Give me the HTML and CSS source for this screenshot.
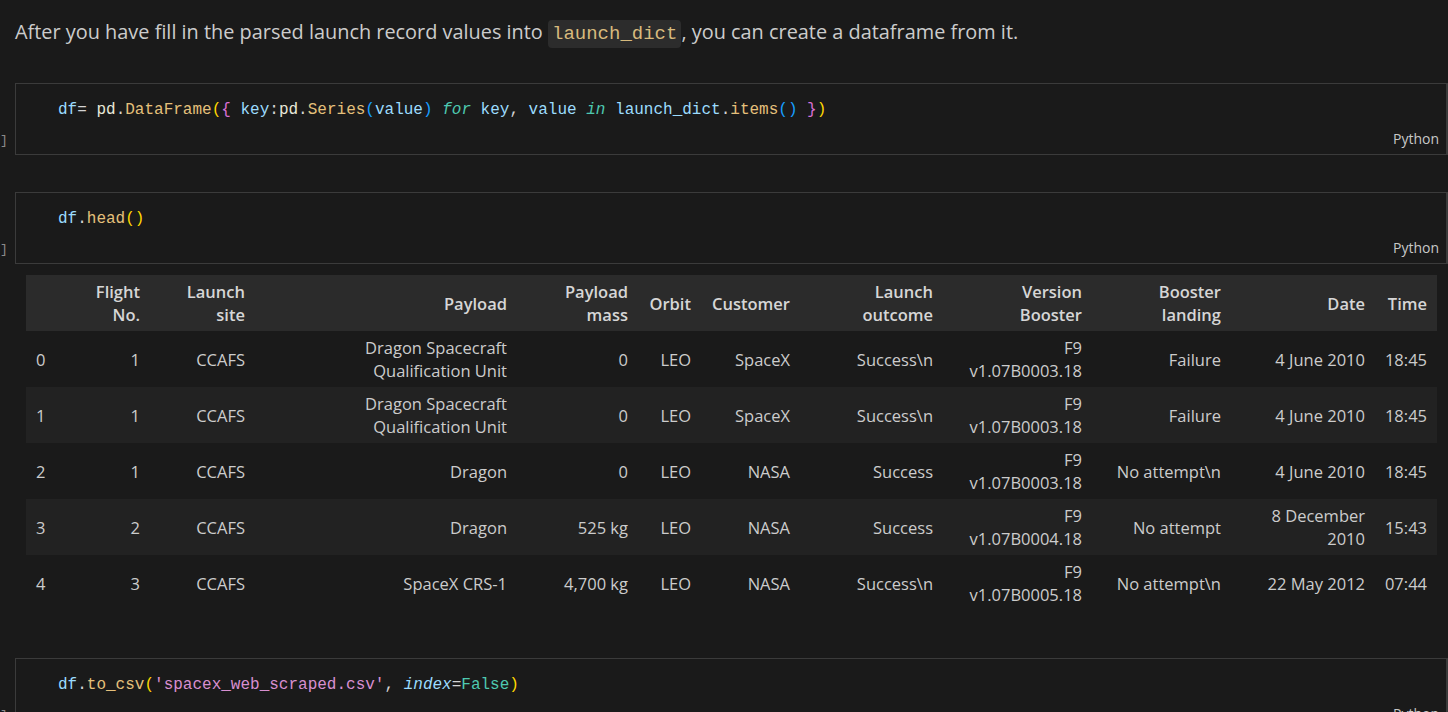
FILE: index.html
```html
<!DOCTYPE html>
<html>
<head>
<meta charset="utf-8">
<link rel="stylesheet" href="styles.css">
</head>
<body>
<div class="md">After you have fill in the parsed launch record values into <code class="inline">launch_dict</code>, you can create a dataframe from it.</div>

<div class="cell">
  <div class="gutter">]</div>
  <div class="box">
    <pre class="code"><span class="v">df</span><span class="op">=</span> <span class="m">pd</span>.<span class="f">DataFrame</span><span class="b1">(</span><span class="b2">{</span> <span class="v">key</span>:<span class="m">pd</span>.<span class="f">Series</span><span class="b3">(</span><span class="v">value</span><span class="b3">)</span> <span class="kw">for</span> <span class="v">key</span>, <span class="v">value</span> <span class="kw">in</span> <span class="v">launch_dict</span>.<span class="f">items</span><span class="b3">()</span> <span class="b2">}</span><span class="b1">)</span></pre>
    <div class="lang">Python</div>
  </div>
</div>

<div class="cell cell2">
  <div class="gutter">]</div>
  <div class="box">
    <pre class="code"><span class="v">df</span>.<span class="f">head</span><span class="b1">()</span></pre>
    <div class="lang">Python</div>
  </div>
</div>

<div class="output">
<table class="df">
  <colgroup>
    <col class="c-idx"><col class="c-flight"><col class="c-site"><col class="c-payload"><col class="c-mass"><col class="c-orbit"><col class="c-cust"><col class="c-out"><col class="c-ver"><col class="c-land"><col class="c-date"><col class="c-time">
  </colgroup>
  <thead>
    <tr><th></th><th>Flight<br>No.</th><th>Launch<br>site</th><th>Payload</th><th>Payload<br>mass</th><th>Orbit</th><th>Customer</th><th>Launch<br>outcome</th><th>Version<br>Booster</th><th>Booster<br>landing</th><th>Date</th><th>Time</th></tr>
  </thead>
  <tbody>
    <tr><td class="idx">0</td><td>1</td><td>CCAFS</td><td>Dragon Spacecraft<br>Qualification Unit</td><td>0</td><td>LEO</td><td>SpaceX</td><td>Success\n</td><td>F9<br>v1.07B0003.18</td><td>Failure</td><td>4 June 2010</td><td>18:45</td></tr>
    <tr><td class="idx">1</td><td>1</td><td>CCAFS</td><td>Dragon Spacecraft<br>Qualification Unit</td><td>0</td><td>LEO</td><td>SpaceX</td><td>Success\n</td><td>F9<br>v1.07B0003.18</td><td>Failure</td><td>4 June 2010</td><td>18:45</td></tr>
    <tr><td class="idx">2</td><td>1</td><td>CCAFS</td><td>Dragon</td><td>0</td><td>LEO</td><td>NASA</td><td>Success</td><td>F9<br>v1.07B0003.18</td><td>No attempt\n</td><td>4 June 2010</td><td>18:45</td></tr>
    <tr><td class="idx">3</td><td>2</td><td>CCAFS</td><td>Dragon</td><td>525 kg</td><td>LEO</td><td>NASA</td><td>Success</td><td>F9<br>v1.07B0004.18</td><td>No attempt</td><td>8 December<br>2010</td><td>15:43</td></tr>
    <tr><td class="idx">4</td><td>3</td><td>CCAFS</td><td>SpaceX CRS-1</td><td>4,700 kg</td><td>LEO</td><td>NASA</td><td>Success\n</td><td>F9<br>v1.07B0005.18</td><td>No attempt\n</td><td>22 May 2012</td><td>07:44</td></tr>
  </tbody>
</table>
</div>

<div class="cell cell3">
  <div class="gutter">]</div>
  <div class="box">
    <pre class="code"><span class="v">df</span>.<span class="f">to_csv</span><span class="b1">(</span><span class="s">'spacex_web_scraped.csv'</span>, <span class="param">index</span><span class="op">=</span><span class="kc">False</span><span class="b1">)</span></pre>
    <div class="lang">Python</div>
  </div>
</div>
</body>
</html>
```

FILE: styles.css
```css
html, body {
  margin: 0;
  padding: 0;
  background: #1a1a1a;
  color: #cccccc;
  font-family: "Open Sans", "Noto Sans", sans-serif;
  overflow: hidden;
  height: 712px;
}

.md {
  padding: 18px 0 0 15px;
  height: 28px;
  font-size: 19.9px;
  line-height: 28px;
  color: #cccccc;
  white-space: nowrap;
}

.inline {
  font-family: "Liberation Mono", monospace;
  font-size: 19px;
  line-height: 20px;
  color: #d7ba7d;
  background: #2c2c2c;
  border-radius: 4px;
  padding: 3px 4px;
}

.cell {
  display: flex;
  margin-top: 37px;
}

.cell2 { margin-top: 37px; }
.cell3 { margin-top: 47px; }

.gutter {
  width: 15px;
  flex: none;
  display: flex;
  align-items: flex-end;
  padding-bottom: 6px;
  box-sizing: border-box;
  font-family: "Liberation Mono", monospace;
  font-size: 13px;
  line-height: 16px;
  color: #8a8a8a;
}

.box {
  flex: 1;
  border: 1px solid #3b3b3b;
  border-right-width: 2px;
  padding: 16px 7px 7px 42px;
}

.code {
  margin: 0;
  font-family: "Liberation Mono", monospace;
  font-size: 16px;
  line-height: 20px;
  color: #d4d4d4;
}

.lang {
  margin-top: 11px;
  text-align: right;
  font-size: 14px;
  line-height: 16px;
  color: #c8c8c8;
}

.v { color: #9cdcfe; }
.m { color: #e8e8d8; }
.f { color: #e5c07b; }
.op { color: #d4d4d4; }
.b1 { color: #ffd700; }
.b2 { color: #da70d6; }
.b3 { color: #179fff; }
.kw { color: #4ec9b0; font-style: italic; }
.s { color: #d88fd0; }
.param { color: #9cdcfe; font-style: italic; }
.kc { color: #4ec9b0; }

.output {
  margin: 11px 0 0 26px;
}

.df {
  table-layout: fixed;
  width: 1411px;
  border-collapse: collapse;
  font-size: 16.5px;
  line-height: 23px;
  color: #cccccc;
}

.c-idx { width: 50px; }
.c-flight { width: 74px; }
.c-site { width: 105px; }
.c-payload { width: 262px; }
.c-mass { width: 121px; }
.c-orbit { width: 63px; }
.c-cust { width: 99px; }
.c-out { width: 143px; }
.c-ver { width: 149px; }
.c-land { width: 139px; }
.c-date { width: 144px; }
.c-time { width: 62px; }

.df th, .df td {
  padding: 0 10px 0 0;
  height: 56px;
  text-align: right;
  vertical-align: middle;
  white-space: nowrap;
}

.df th {
  background: #2b2b2b;
  font-weight: 600;
  color: #d6d6d6;
}

.df td.idx {
  text-align: left;
  padding-left: 10px;
}

.df tbody tr:nth-child(even) td {
  background: #222222;
}
```
